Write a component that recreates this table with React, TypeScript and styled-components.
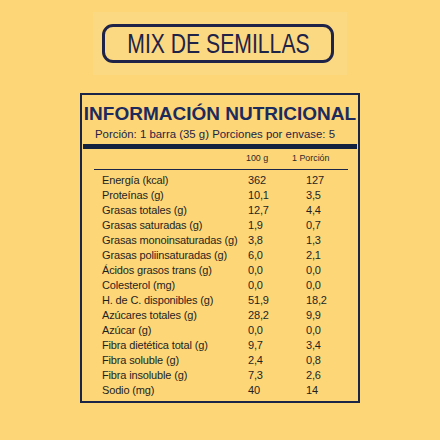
import React from 'react';
import styled, { createGlobalStyle } from 'styled-components';

const GlobalStyle = createGlobalStyle`
  html, body {
    margin: 0;
    padding: 0;
    background: #fdd677;
  }
  body {
    font-family: "Liberation Sans", Arial, sans-serif;
  }
`;

const rows: [string, string, string][] = [
  ['Energía (kcal)', '362', '127'],
  ['Proteínas (g)', '10,1', '3,5'],
  ['Grasas totales (g)', '12,7', '4,4'],
  ['Grasas saturadas (g)', '1,9', '0,7'],
  ['Grasas monoinsaturadas (g)', '3,8', '1,3'],
  ['Grasas poliinsaturadas (g)', '6,0', '2,1'],
  ['Ácidos grasos trans (g)', '0,0', '0,0'],
  ['Colesterol (mg)', '0,0', '0,0'],
  ['H. de C. disponibles (g)', '51,9', '18,2'],
  ['Azúcares totales (g)', '28,2', '9,9'],
  ['Azúcar (g)', '0,0', '0,0'],
  ['Fibra dietética total (g)', '9,7', '3,4'],
  ['Fibra soluble (g)', '2,4', '0,8'],
  ['Fibra insoluble (g)', '7,3', '2,6'],
  ['Sodio (mg)', '40', '14'],
];

const App = () => {
  return (
    <>
      <GlobalStyle />
      <Page>
        <Header>
          <Pill>
            <PillText>MIX DE SEMILLAS</PillText>
          </Pill>
        </Header>
        <Label>
          <Title>INFORMACIÓN NUTRICIONAL</Title>
          <Serving>Porción: 1 barra (35 g) Porciones por envase: 5</Serving>
          <ThickBar />
          <HeadRow>
            <span />
            <span>100 g</span>
            <span>1 Porción</span>
          </HeadRow>
          <Rule />
          <Rows>
            {rows.map(([name, a, b]) => (
              <Row key={name}>
                <span>{name}</span>
                <span>{a}</span>
                <span>{b}</span>
              </Row>
            ))}
          </Rows>
        </Label>
      </Page>
    </>
  );
};

export default App;

const Page = styled.div`
  width: 440px;
  height: 440px;
  display: flex;
  flex-direction: column;
  align-items: center;
  padding-top: 12px;
  box-sizing: border-box;
  overflow: hidden;
`;

const Header = styled.div`
  width: 254px;
  height: 63px;
  background: #fbd982;
  display: flex;
  align-items: center;
  justify-content: center;
`;

const Pill = styled.div`
  width: 232px;
  height: 39px;
  box-sizing: border-box;
  border: 3px solid #1f2347;
  border-radius: 11px;
  display: flex;
  align-items: center;
  justify-content: center;
  color: #1f2347;
  margin-left: -4px;
`;

const PillText = styled.span`
  display: inline-block;
  font-family: "Liberation Sans", Arial, sans-serif;
  font-size: 27.5px;
  line-height: 30px;
  white-space: nowrap;
  transform: scaleX(0.77);
  padding-top: 1px;
`;

const Label = styled.div`
  margin-top: 18px;
  width: 280px;
  height: 310px;
  box-sizing: border-box;
  border: 2px solid #1b2548;
  display: flex;
  flex-direction: column;
  padding-top: 8px;
`;

const Title = styled.div`
  font-weight: bold;
  font-size: 19px;
  line-height: 22px;
  color: #1c2a5e;
  text-align: center;
  white-space: nowrap;
`;

const Serving = styled.div`
  font-size: 11.4px;
  line-height: 14px;
  color: #1c2345;
  padding-left: 13px;
  margin-top: 2px;
  white-space: nowrap;
`;

const ThickBar = styled.div`
  height: 5px;
  background: #14213f;
  margin: 3px 1px 0;
`;

const HeadRow = styled.div`
  display: grid;
  grid-template-columns: 164px 46px 1fr;
  margin-top: 4px;
  font-size: 8.9px;
  line-height: 11px;
  color: #2a2a2a;
  white-space: nowrap;
`;

const Rule = styled.div`
  height: 1px;
  background: #1b2548;
  margin: 5px 10px 0 12px;
`;

const Rows = styled.div`
  display: flex;
  flex-direction: column;
  margin-top: 3px;
`;

const Row = styled.div`
  display: grid;
  grid-template-columns: 146px 58px 1fr;
  padding-left: 20px;
  font-size: 11px;
  letter-spacing: -0.15px;
  line-height: 15px;
  color: #1f1f1f;
  white-space: nowrap;
`;
